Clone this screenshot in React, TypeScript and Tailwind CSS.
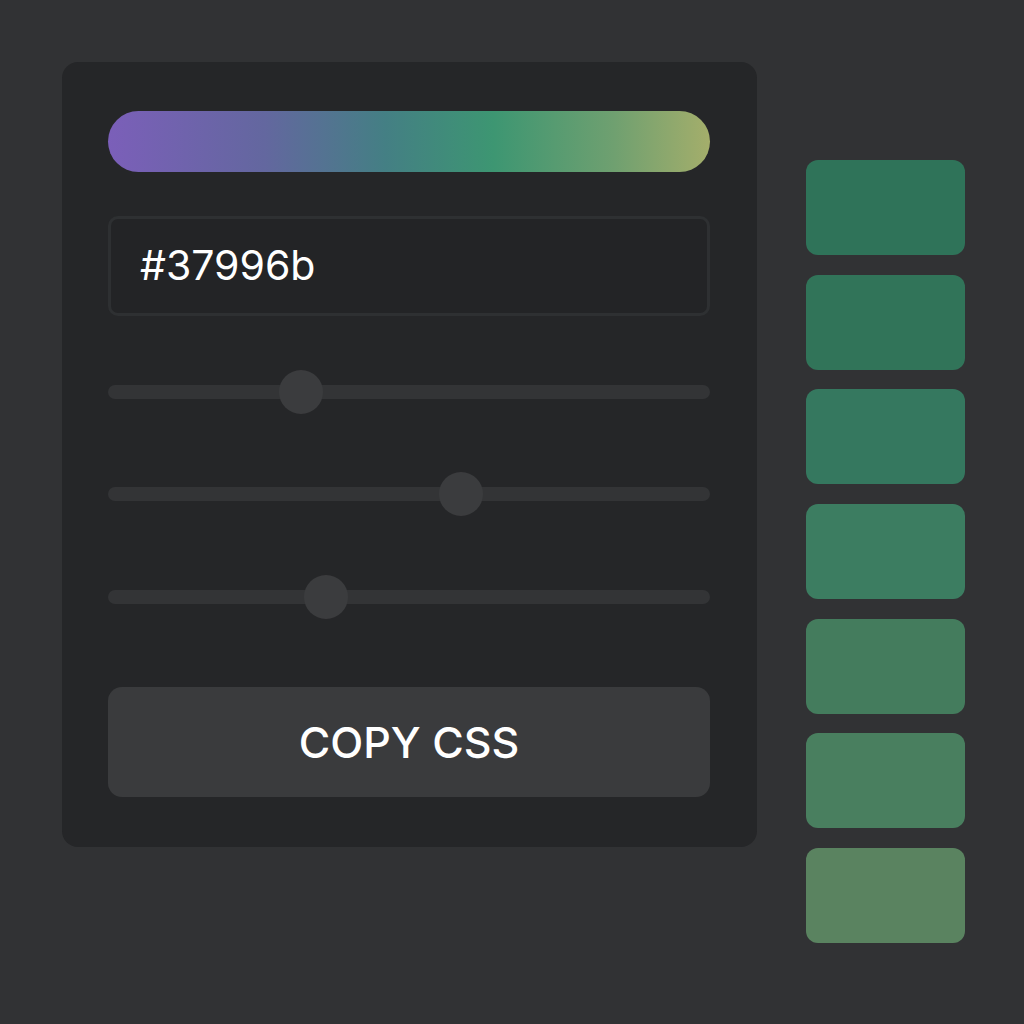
import React from "react";

const swatches = ["#2f7359", "#317459", "#35785f", "#3c7d61", "#447c5d", "#497f5f", "#5a8360"];

function Slider({ left }: { left: number }) {
  return (
    <div className="relative h-[44px] flex items-center">
      <div className="h-[14px] w-full rounded-full bg-[#333436]" />
      <div
        className="absolute top-0 h-[44px] w-[44px] rounded-full bg-[#3b3c3e]"
        style={{ left }}
      />
    </div>
  );
}

export default function App() {
  return (
    <div
      className="min-h-screen w-full bg-[#313234] flex items-start pt-[62px] pl-[62px]"
      style={{ fontFamily: "Inter, 'Noto Sans', sans-serif" }}
    >
      <div className="w-[695px] h-[785px] rounded-[16px] bg-[#252628] pl-[46px] pr-[47px] pt-[49px] flex flex-col">
        <div className="h-[61px] w-full rounded-full bg-[linear-gradient(90deg,#7b5fb9_0%,#63679f_26%,#447f84_46%,#3d9672_64%,#6fa070_84%,#a4ae6b_100%)]" />
        <div className="mt-[44px] h-[100px] w-full rounded-[10px] border-[3px] border-[#2e3032] bg-[#232426] flex items-center pl-[29px]">
          <span className="text-[41px] text-white">#37996b</span>
        </div>
        <div className="mt-[54px]">
          <Slider left={171} />
        </div>
        <div className="mt-[58px]">
          <Slider left={331} />
        </div>
        <div className="mt-[59px]">
          <Slider left={196} />
        </div>
        <div className="mt-[68px] h-[110px] w-full rounded-[14px] bg-[#3a3b3d] flex items-center justify-center">
          <span className="text-[43px] font-medium text-white">COPY CSS</span>
        </div>
      </div>
      <div className="ml-[49px] mt-[98px] flex flex-col gap-[19.7px]">
        {swatches.map((c) => (
          <div key={c} className="w-[159px] h-[95px] rounded-[12px]" style={{ backgroundColor: c }} />
        ))}
      </div>
    </div>
  );
}
